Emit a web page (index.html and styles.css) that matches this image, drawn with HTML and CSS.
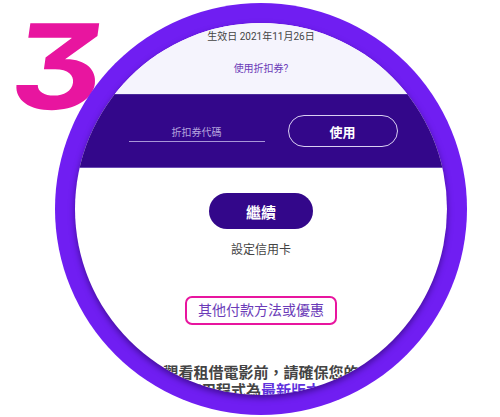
FILE: index.html
```html
<!DOCTYPE html>
<html lang="zh-Hant">
<head>
    <meta charset="UTF-8">
    <meta name="viewport" content="width=device-width, initial-scale=1.0">
    <title>步驟 3 - 付款</title>
    <link rel="stylesheet" href="styles.css">
</head>
<body>
    <div class="step-number">3</div>
    <div class="stage">
        <div class="ring">
            <div class="disk">
                <div class="offer-info">
                    <div class="valid-date">生效日 2021年11月26日</div>
                    <div class="coupon-question">使用折扣券?</div>
                </div>
                <div class="coupon-band">
                    <input class="coupon-input" type="text" placeholder="折扣券代碼">
                    <button class="apply-button">使用</button>
                </div>
                <div class="payment-area">
                    <button class="continue-button">繼續</button>
                    <div class="card-link">設定信用卡</div>
                    <div class="other-methods">其他付款方法或優惠</div>
                    <p class="notice">觀看租借電影前，請確保您的<br>應用程式為<span class="notice-link">最新版本</span>。</p>
                </div>
            </div>
        </div>
    </div>
</body>
</html>
```

FILE: styles.css
```css
body {
    margin: 0;
    width: 500px;
    height: 417px;
    overflow: hidden;
    background: #fff;
    position: relative;
    font-family: 'Roboto', 'Noto Sans CJK TC', sans-serif;
}

.step-number {
    position: absolute;
    left: 4px;
    top: 7px;
    font-family: 'Inter', sans-serif;
    font-feature-settings: "cv09";
    font-size: 118px;
    line-height: 1;
    font-weight: 700;
    color: #e8159f;
    transform: skewX(-8deg) scaleX(1.2);
    transform-origin: left bottom;
}

.stage {
    padding: 3px 0 0 55px;
}

.ring {
    position: relative;
    z-index: 1;
    width: 412px;
    height: 412px;
    box-sizing: border-box;
    padding: 20px;
    border-radius: 50%;
    background: #701ef2;
}

.disk {
    width: 372px;
    height: 372px;
    border-radius: 50%;
    overflow: hidden;
    background: #fff;
    box-shadow: 0 3px 6px rgba(30, 0, 80, 0.55);
    text-align: center;
}

.offer-info {
    background: #f5f4fd;
    padding: 7px 0 18px;
}

.valid-date {
    font-size: 10px;
    line-height: 14px;
    color: #444;
}

.coupon-question {
    margin-top: 18px;
    font-size: 10px;
    line-height: 14px;
    color: #6b3bb8;
}

.coupon-band {
    height: 72px;
    background: #33078a;
    border-top: 1px solid #4a2a9a;
    border-bottom: 1px solid #6a4cb4;
    display: flex;
    justify-content: center;
    align-items: center;
    gap: 23px;
    padding-left: 4px;
}

.coupon-input {
    width: 136px;
    height: 18px;
    margin-top: 3px;
    padding: 0;
    box-sizing: border-box;
    border: none;
    border-bottom: 1px solid #a896d8;
    background: transparent;
    text-align: center;
    font-family: 'Roboto', 'Noto Sans CJK TC', sans-serif;
    font-size: 10px;
    color: #fff;
}

.coupon-input::placeholder {
    color: #b3a3de;
}

.apply-button {
    width: 110px;
    height: 32px;
    border: 1px solid #d9d0f2;
    border-radius: 16px;
    background: transparent;
    color: #fff;
    font-family: 'Roboto', 'Noto Sans CJK TC', sans-serif;
    font-size: 13px;
    font-weight: 700;
    cursor: pointer;
}

.payment-area {
    padding-top: 25px;
    display: flex;
    flex-direction: column;
    align-items: center;
}

.continue-button {
    width: 104px;
    height: 36px;
    border: none;
    border-radius: 18px;
    background: #33078a;
    color: #fff;
    font-family: 'Roboto', 'Noto Sans CJK TC', sans-serif;
    font-size: 15px;
    font-weight: 700;
    cursor: pointer;
}

.card-link {
    margin-top: 13px;
    font-size: 12px;
    line-height: 16px;
    color: #444;
}

.other-methods {
    margin-top: 38px;
    height: 29px;
    box-sizing: border-box;
    padding: 0 11px;
    border: 2px solid #e8159f;
    border-radius: 7px;
    font-size: 14px;
    line-height: 25px;
    color: #6b3bb8;
}

.notice {
    margin: 39px 0 0;
    font-size: 15px;
    line-height: 18px;
    font-weight: 700;
    color: #444;
}

.notice-link {
    color: #5e30dc;
}
```
